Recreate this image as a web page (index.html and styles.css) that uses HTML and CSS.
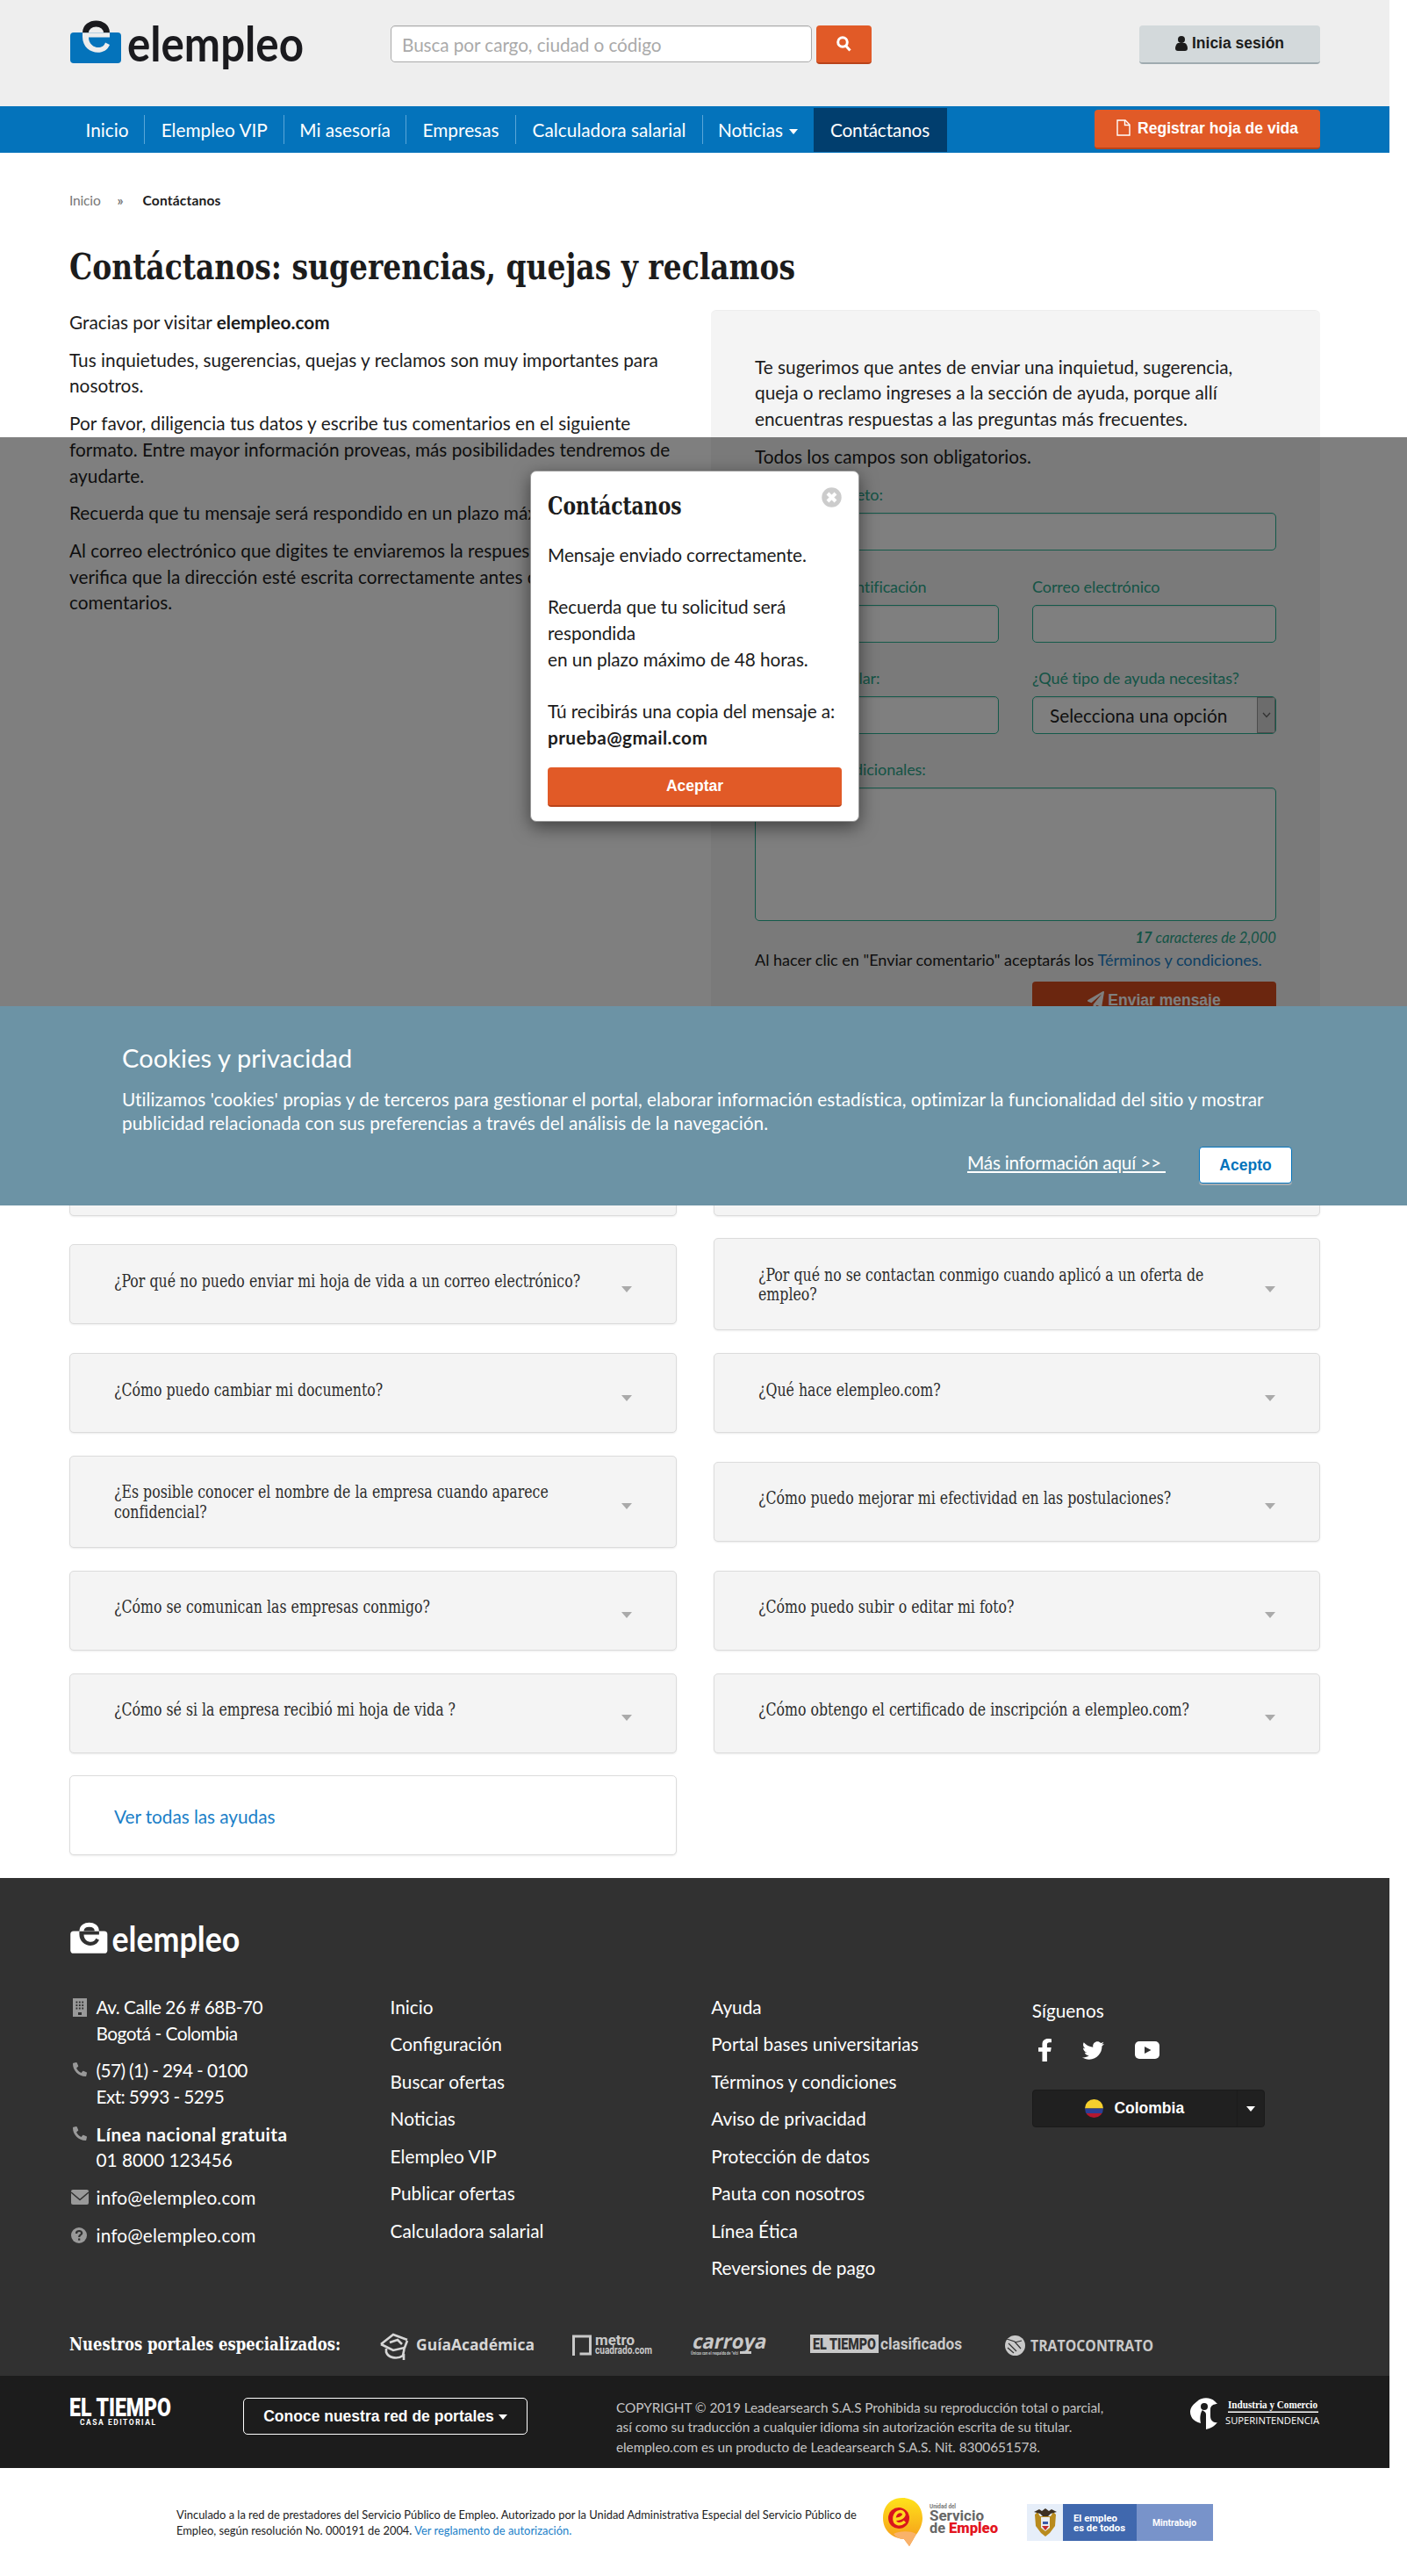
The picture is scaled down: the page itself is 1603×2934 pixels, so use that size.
FILE: index.html
```html
<!DOCTYPE html>
<html lang="es">
<head>
<meta charset="utf-8">
<title>Contáctanos | elempleo</title>
<link rel="stylesheet" href="styles.css">
</head>
<body>
<svg width="0" height="0" class="defs" aria-hidden="true">
  <symbol id="phone" viewBox="0 0 512 512"><path transform="matrix(-1 0 0 1 512 0)" d="M493.4 24.6l-104-24c-11.3-2.6-22.9 3.3-27.5 13.9l-48 112c-4.2 9.8-1.4 21.3 6.9 28l60.6 49.6c-36 76.7-98.9 140.5-177.2 177.2l-49.6-60.6c-6.8-8.3-18.2-11.1-28-6.9l-112 48C3.9 366.5-2 378.1.6 389.4l24 104C27.1 504.2 36.7 512 48 512c256.1 0 464-207.5 464-464 0-11.2-7.7-20.9-18.6-23.4z"/></symbol>
</svg>
<div class="page">
  <header class="header">
    <div class="container header-row">
      <svg class="logo" width="268" height="62" viewBox="0 0 268 62">
        <rect x="0" y="13" width="58" height="35" rx="4" fill="#0473bb"/>
        <path d="M17.500 13.500C17.500 -.5 41.500 -.5 41.500 13.500" fill="none" stroke="#1a1a1e" stroke-width="7"/>
        <path d="M14 13.300H45V18.500H21C21 31 37 34 40 24.500L45 27C39 42 14 37 14 18Z" fill="#ededed"/>
        <text x="65" y="46" font-size="56" textLength="201" lengthAdjust="spacingAndGlyphs" fill="#1a1a1e" class="brand">elempleo</text>
      </svg>
      <div class="search">
        <div class="search-input">Busca por cargo, ciudad o código</div>
        <button class="btn btn-orange btn-search"><svg width="17" height="18" viewBox="0 0 17 18" fill="none" stroke="#fff" stroke-width="3"><circle cx="7" cy="7" r="5.300"/><path d="M10.500 11l5 5.500"/></svg></button>
      </div>
      <button class="btn btn-gray"><svg width="14" height="17" viewBox="0 0 14 17" fill="#1c1c1c"><circle cx="7" cy="4" r="4"/><path d="M3 8h8c2 1 3 4 3 6s-1 3-3 3H3c-2 0-3-1-3-3s1-5 3-6z"/></svg>Inicia sesión</button>
    </div>
  </header>
  <nav class="nav">
    <div class="container nav-row">
      <div class="menu">
        <a>Inicio</a><a>Elempleo VIP</a><a>Mi asesoría</a><a>Empresas</a><a>Calculadora salarial</a><a>Noticias<i class="caret"></i></a><a class="active">Contáctanos</a>
      </div>
      <button class="btn btn-orange btn-register"><svg width="16" height="19" viewBox="0 0 16 19" fill="none" stroke="#fff" stroke-width="1.400"><path d="M1 1h9l5 5v12H1z"/><path d="M9.500 1v5.500H15"/></svg>Registrar hoja de vida</button>
    </div>
  </nav>

  <div class="container">
    <div class="crumbs"><span>Inicio</span><b class="sep">»</b><b>Contáctanos</b></div>
    <h1>Contáctanos: sugerencias, quejas y reclamos</h1>
    <div class="main">
      <div class="intro">
        <p>Gracias por visitar <b>elempleo.com</b></p>
        <p>Tus inquietudes, sugerencias, quejas y reclamos son muy importantes para<br>nosotros.</p>
        <p>Por favor, diligencia tus datos y escribe tus comentarios en el siguiente<br>formato. Entre mayor información proveas, más posibilidades tendremos de<br>ayudarte.</p>
        <p>Recuerda que tu mensaje será respondido en un plazo máximo</p>
        <p>Al correo electrónico que digites te enviaremos la respuesta,<br>verifica que la dirección esté escrita correctamente antes de<br>comentarios.</p>
      </div>
      <div class="panel">
        <p>Te sugerimos que antes de enviar una inquietud, sugerencia,<br>queja o reclamo ingreses a la sección de ayuda, porque allí<br>encuentras respuestas a las preguntas más frecuentes.</p>
        <p>Todos los campos son obligatorios.</p>
        <div class="form">
          <div class="field wide"><label>Nombre completo:</label><div class="input"></div></div>
          <div class="field"><label class="loose">Número de identificación</label><div class="input"></div></div>
          <div class="field"><label>Correo electrónico</label><div class="input"></div></div>
          <div class="field"><label>Teléfono o celular:</label><div class="input"></div></div>
          <div class="field"><label>¿Qué tipo de ayuda necesitas?</label><div class="input select"><span>Selecciona una opción</span><i><svg width="10" height="7" viewBox="0 0 10 7" fill="none" stroke="#666" stroke-width="1.300"><path d="M1 1l4 4.500L9 1"/></svg></i></div></div>
          <div class="field wide"><label>Comentarios adicionales:</label><div class="input area"></div></div>
        </div>
        <div class="counter"><b>17</b> caracteres de 2,000</div>
        <div class="legal">Al hacer clic en "Enviar comentario" aceptarás los <a>Términos y condiciones.</a></div>
        <button class="btn btn-send"><svg width="19" height="19" viewBox="0 0 512 512" fill="#fff"><path d="M476 3.2L12.5 270.6c-18.1 10.4-15.8 35.6 2.2 43.2L121 358.4l287.3-253.2c5.5-4.9 13.3 2.6 8.6 8.3L176 407v80.5c0 23.6 28.5 32.9 42.5 15.8L282 426l124.6 52.2c14.2 6 30.4-2.900 33-18.200l72-432C515 7.800 493.300-6.800 476 3.200z"/></svg>Enviar mensaje</button>
      </div>
    </div>

    <div class="faq">
      <div class="card"></div>
      <div class="card"></div>
      <div class="card"><span>¿Por qué no puedo enviar mi hoja de vida a un correo electrónico?</span><i></i></div>
      <div class="card two"><span>¿Por qué no se contactan conmigo cuando aplicó a un oferta de<br>empleo?</span><i></i></div>
      <div class="card"><span>¿Cómo puedo cambiar mi documento?</span><i></i></div>
      <div class="card"><span>¿Qué hace elempleo.com?</span><i></i></div>
      <div class="card two"><span>¿Es posible conocer el nombre de la empresa cuando aparece<br>confidencial?</span><i></i></div>
      <div class="card"><span>¿Cómo puedo mejorar mi efectividad en las postulaciones?</span><i></i></div>
      <div class="card"><span>¿Cómo se comunican las empresas conmigo?</span><i></i></div>
      <div class="card"><span>¿Cómo puedo subir o editar mi foto?</span><i></i></div>
      <div class="card"><span>¿Cómo sé si la empresa recibió mi hoja de vida ?</span><i></i></div>
      <div class="card"><span>¿Cómo obtengo el certificado de inscripción a elempleo.com?</span><i></i></div>
      <div class="card more"><a>Ver todas las ayudas</a></div>
    </div>
  </div>

  <footer class="footer">
    <div class="container">
      <svg class="flogo" width="195" height="45" viewBox="0 0 268 62">
        <rect x="0" y="13" width="58" height="35" rx="5" fill="#fff"/>
        <path d="M17.500 13.500C17.500 -.5 41.500 -.5 41.500 13.500" fill="none" stroke="#fff" stroke-width="7"/>
        <path d="M14 13.300H45V18.500H21C21 31 37 34 40 24.500L45 27C39 42 14 37 14 18Z" fill="#313131"/>
        <text x="65" y="46" font-size="56" textLength="201" lengthAdjust="spacingAndGlyphs" fill="#fff" class="brand">elempleo</text>
      </svg>
      <div class="fcols">
        <ul class="contact">
          <li><svg width="16" height="21" viewBox="0 0 16 21"><path fill="#999" d="M0 0h16v21H0z"/><path stroke="#313131" stroke-width="1.800" stroke-dasharray="1.800 1.600" d="M3.500 4.500h10M3.500 8h10M3.500 11.500h10"/><path fill="#313131" d="M6 16h4v3H6z"/></svg><span>Av. Calle 26 # 68B-70<br>Bogotá - Colombia</span></li>
          <li><svg width="16" height="16" fill="#999"><use href="#phone"/></svg><span>(57) (1) - 294 - 0100<br>Ext: 5993 - 5295</span></li>
          <li><svg width="16" height="16" fill="#999"><use href="#phone"/></svg><span><b>Línea nacional gratuita</b><br>01 8000 123456</span></li>
          <li><svg width="20" height="17" viewBox="0 0 20 17"><rect width="20" height="17" rx="2" fill="#999"/><path d="M0 3l10 8.500L20 3" fill="none" stroke="#313131" stroke-width="1.600"/></svg><span>info@elempleo.com</span></li>
          <li><svg width="18" height="18" viewBox="0 0 18 18"><circle cx="9" cy="9" r="9" fill="#999"/><path d="M6 7c0-4 6.200-3.800 6.200-.6C12.200 8.600 9.200 8.400 9.200 11M9.200 12.500v2.300" fill="none" stroke="#313131" stroke-width="2.200"/></svg><span>info@elempleo.com</span></li>
        </ul>
        <ul><li>Inicio</li><li>Configuración</li><li>Buscar ofertas</li><li>Noticias</li><li>Elempleo VIP</li><li>Publicar ofertas</li><li>Calculadora salarial</li></ul>
        <ul><li>Ayuda</li><li>Portal bases universitarias</li><li>Términos y condiciones</li><li>Aviso de privacidad</li><li>Protección de datos</li><li>Pauta con nosotros</li><li>Línea Ética</li><li>Reversiones de pago</li></ul>
        <div class="social">
          <div>Síguenos</div>
          <div class="nets">
            <svg width="15" height="26" viewBox="22 0 276 512" preserveAspectRatio="none" fill="#fff"><path d="M279.140 288l14.220-92.660h-88.910v-60.130c0-25.350 12.420-50.060 52.240-50.060h40.420V6.260S260.430 0 225.360 0c-73.220 0-121.080 44.380-121.080 124.720v70.620H22.890V288h81.390v224h100.170V288z"/></svg>
            <svg width="25" height="25" viewBox="0 0 512 512" fill="#fff"><path d="M459.370 151.716c.325 4.548.325 9.097.325 13.645 0 138.720-105.583 298.558-298.558 298.558-59.452 0-114.680-17.219-161.137-47.106 8.447.974 16.568 1.299 25.340 1.299 49.055 0 94.213-16.568 130.274-44.832-46.132-.975-84.792-31.188-98.112-72.772 6.498.974 12.995 1.624 19.818 1.624 9.421 0 18.843-1.300 27.614-3.573-48.081-9.747-84.143-51.980-84.143-102.985v-1.299c13.969 7.797 30.214 12.670 47.431 13.319-28.264-18.843-46.781-51.005-46.781-87.391 0-19.492 5.197-37.360 14.294-52.954 51.655 63.675 129.300 105.258 216.365 109.807-1.624-7.797-2.599-15.918-2.599-24.040 0-57.828 46.782-104.934 104.934-104.934 30.213 0 57.502 12.670 76.670 33.137 23.715-4.548 46.456-13.320 66.599-25.340-7.798 24.366-24.366 44.833-46.132 57.827 21.117-2.273 41.584-8.122 60.426-16.243-14.292 20.791-32.161 39.308-52.628 54.253z"/></svg>
            <svg width="28" height="20" viewBox="0 0 28 20"><rect width="28" height="20" rx="5" fill="#fff"/><path d="M11 6l7.500 4L11 14z" fill="#313131"/></svg>
          </div>
          <div class="country"><div><svg width="21" height="21" viewBox="0 0 21 21"><clipPath id="r"><circle cx="10.500" cy="10.500" r="10.500"/></clipPath><g clip-path="url(#r)"><path fill="#f5cf2e" d="M0 0h21v10.500H0z"/><path fill="#2c3f94" d="M0 10.500h21v5.500H0z"/><path fill="#b3172f" d="M0 16h21v5H0z"/></g></svg>Colombia</div><div class="drop"><i class="caret"></i></div></div>
        </div>
      </div>
      <div class="portals">
        <h4>Nuestros portales especializados:</h4>
        <svg width="883" height="34" viewBox="433 2655 883 34" fill="#c9c9c9">
          <g fill="none" stroke="#d6d6d6" stroke-width="2.600"><path d="M434 2671l14-11 16 6M434 2671l14 7 13-3 3-8M440 2676v4c2 6 12 9 19 4l2-10M444 2669l9-3 5 5M460 2682v7"/></g>
          <text x="474" y="2678" font-size="18" textLength="135" lengthAdjust="spacingAndGlyphs" fill="#d6d6d6" class="sans-b">GuíaAcadémica</text>
          <path d="M653.500 2684v-22h19v20h-12" fill="none" stroke="#c9c9c9" stroke-width="3"/>
          <text x="678" y="2672" font-size="17" textLength="45" lengthAdjust="spacingAndGlyphs" class="cond-b">metro</text>
          <text x="678" y="2682" font-size="12" textLength="65" lengthAdjust="spacingAndGlyphs" class="cond-b">cuadrado.com</text>
          <text transform="translate(788 2676) skewX(-12)" font-size="23" textLength="84" lengthAdjust="spacingAndGlyphs" class="sans-b">carroya</text>
          <text x="787" y="2683" font-size="6" textLength="54" lengthAdjust="spacingAndGlyphs" class="sans-b">Únicos con el respaldo de "eltí</text>
          <path d="M843 2680.500h13" stroke="#c9c9c9" stroke-width="3"/>
          <path d="M923 2660h78v21h-78z"/>
          <text x="926" y="2677" font-size="19" textLength="72" lengthAdjust="spacingAndGlyphs" class="cond" fill="#313131">EL TIEMPO</text>
          <text x="1003" y="2677" font-size="19" textLength="93" lengthAdjust="spacingAndGlyphs" class="cond-b">clasificados</text>
          <circle cx="1156.500" cy="2672.500" r="11.500"/><path d="M1147 2665l9 3 7 8M1149 2670l9 9M1148 2675l7 6M1164 2667l-8 2" stroke="#313131" stroke-width="1.200" fill="none"/>
          <text x="1174" y="2679" font-size="18" textLength="140" lengthAdjust="spacingAndGlyphs" class="sans-b">TRATOCONTRATO</text>
        </svg>
      </div>
    </div>
  </footer>
  <div class="bottom">
    <div class="container bottom-row">
      <svg width="118" height="32" viewBox="0 0 118 32" fill="#fff"><text x="0" y="21" font-size="29" textLength="116" lengthAdjust="spacingAndGlyphs" class="cond">EL TIEMPO</text><text x="12" y="31" font-size="8.500" textLength="86" class="cond-b">CASA EDITORIAL</text></svg>
      <button class="btn-outline">Conoce nuestra red de portales<i class="caret"></i></button>
      <div class="copy">COPYRIGHT © 2019 Leadearsearch S.A.S Prohibida su reproducción total o parcial,<br>así como su traducción a cualquier idioma sin autorización escrita de su titular.<br>elempleo.com es un producto de Leadearsearch S.A.S. Nit. 8300651578.</div>
      <svg class="sic" width="148" height="36" viewBox="0 0 148 36" fill="#fff">
        <path d="M8 4C13-1 23-1 28 4l3 3c-4 0-8 2-8 6v8c0 5 4 8 8 7-4 5-8 7-13 8V19c0-3-3-4-3-4l-1-1c-3 4-3 10-2 15C3 27 0 21 0 16 0 11 4 7 8 4z"/><circle cx="16" cy="10" r="4" fill="#1c1c1c"/>
        <text x="43" y="12" font-size="13" textLength="102" lengthAdjust="spacingAndGlyphs" class="serif-b">Industria y Comercio</text>
        <path d="M43 15.500h103v1.600H43z"/>
        <text x="40" y="30" font-size="10.500" textLength="107" lengthAdjust="spacingAndGlyphs" class="sans">SUPERINTENDENCIA</text>
      </svg>
    </div>
  </div>
  <div class="gov">
    <div class="gov-text">Vinculado a la red de prestadores del Servicio Público de Empleo. Autorizado por la Unidad Administrativa Especial del Servicio Público de<br>Empleo, según resolución No. 000191 de 2004. <a>Ver reglamento de autorización.</a></div>
    <svg class="spe" width="132" height="56" viewBox="0 0 132 56">
      <defs><linearGradient id="y" x1="0" y1="0" x2="0" y2="1"><stop offset="0" stop-color="#ffe21a"/><stop offset=".75" stop-color="#f7a81b"/><stop offset="1" stop-color="#ee7a1a"/></linearGradient></defs>
      <path fill="url(#y)" d="M22 0c13 0 23 9 23 23 0 8-4 15-8 20l-7 12-6-8C9 46 0 36 0 23 0 9 9 0 22 0z"/>
      <path fill="#f9b26a" d="M12 41c6-3 18-4 26 0l-8 14-6-8c-5 0-9-2-12-6z"/>
      <circle cx="18" cy="23" r="12" fill="#d9161c"/>
      <path d="M12 24c5 1 11-1 12-5-1-5-9-5-11 3-1 8 6 10 12 5" fill="none" stroke="#ffd81f" stroke-width="3.500"/>
      <text x="53" y="12" font-size="7" textLength="30" lengthAdjust="spacingAndGlyphs" fill="#777" class="cond-b">Unidad del</text>
      <text x="53" y="26" font-size="16" textLength="62" lengthAdjust="spacingAndGlyphs" fill="#666" class="cond-b">Servicio</text>
      <text x="53" y="40" font-size="16" textLength="18" lengthAdjust="spacingAndGlyphs" fill="#666" class="cond-b">de</text>
      <text x="75" y="40" font-size="16" textLength="56" lengthAdjust="spacingAndGlyphs" fill="#e3161f" class="cond">Empleo</text>
    </svg>
    <svg class="min" width="212" height="42" viewBox="0 0 212 42">
      <path fill="#e6eef9" d="M0 0h41v42H0z"/><path fill="#4068ae" d="M41 0h84v42H41z"/><path fill="#7893ca" d="M125 0h87v42h-87z"/>
      <path fill="#b98b1e" d="M9 12l3-3 3 5h12l3-5 3 3-1 13-6 8-5 4-5-4-6-8z"/><path fill="#3c2f20" d="M8 9l6-3 3 2 4-3 4 3 3-2 6 3-7 2-3 3h-6l-3-3z"/><path fill="#e9edf0" d="M16 15h10v12l-5 4-5-4z"/><path fill="#3a5aa8" d="M18 20h6v3h-6z"/><path fill="#c22a2a" d="M17 25h8l-4 5z"/>
      <text x="53" y="20" font-size="11" textLength="50" lengthAdjust="spacingAndGlyphs" fill="#fff" class="cond-b">El empleo</text>
      <text x="53" y="31" font-size="11" textLength="59" lengthAdjust="spacingAndGlyphs" fill="#fff" class="cond-b">es de todos</text>
      <text x="143" y="25" font-size="11" textLength="50" lengthAdjust="spacingAndGlyphs" fill="#fff" class="cond-b">Mintrabajo</text>
    </svg>
  </div>
</div>

<div class="backdrop"></div>
<div class="modal">
  <div class="modal-head"><h3>Contáctanos</h3><svg width="23" height="23" viewBox="0 0 23 23"><circle cx="11.500" cy="11.500" r="11.200" fill="#ccc"/><path d="M7 7l9 9M16 7l-9 9" stroke="#fff" stroke-width="4"/></svg></div>
  <div class="modal-body">Mensaje enviado correctamente.<br><br>Recuerda que tu solicitud será<br>respondida<br>en un plazo máximo de 48 horas.<br><br>Tú recibirás una copia del mensaje a:<br><b>prueba@gmail.com</b></div>
  <button class="btn btn-orange btn-accept">Aceptar</button>
</div>
<div class="cookies">
  <h2>Cookies y privacidad</h2>
  <p>Utilizamos 'cookies' propias y de terceros para gestionar el portal, elaborar información estadística, optimizar la funcionalidad del sitio y mostrar<br>publicidad relacionada con sus preferencias a través del análisis de la navegación.</p>
  <div class="cookies-actions"><a>Más información aquí &gt;&gt;&nbsp;</a><button class="btn btn-white">Acepto</button></div>
</div>
</body>
</html>
```
FILE: styles.css
```css
* { box-sizing: border-box; }
html { background: #fff; }
body { position: relative; margin: 0; width: 1603px; height: 2934px; overflow: hidden; font-family: Lato, "Noto Sans", sans-serif; font-size: 20.8px; line-height: 29.7px; color: #1c1c1c; }
p, h1, h2, h3, h4, ul { margin: 0; padding: 0; }
ul { list-style: none; }
a { color: #1b80c8; }
button { margin: 0; padding: 0; }
svg { overflow: visible; }
.defs { position: absolute; }
.page { width: 1583px; }
.container { width: 1425px; margin-left: 79px; }
text { font-family: "Open Sans", sans-serif; }
.brand { font-family: Lato, sans-serif; font-weight: 700; }
.sans-b { font-weight: 700; }
.sans { font-weight: 400; }
.cond { font-family: Roboto, sans-serif; font-weight: 900; }
.cond-b { font-family: Roboto, sans-serif; font-weight: 700; }
.serif-b { font-family: "Liberation Serif", serif; font-weight: 700; }

/* narrow slab headings */
h1, h3, h4, .card span { font-family: "DejaVu Serif Condensed", "DejaVu Serif", serif; font-stretch: condensed; transform-origin: 0 0; white-space: nowrap; }

.btn { display: flex; align-items: center; justify-content: center; border: 0; border-radius: 4px; font: bold 17.5px/24px "Liberation Sans", Arial, sans-serif; color: #fff; white-space: nowrap; }
.btn-orange { background: #e15a27; border-bottom: 2px solid #b9431a; }
.caret { display: inline-block; width: 0; height: 0; border: 5px solid transparent; border-top: 6px solid #fff; border-bottom: 0; vertical-align: middle; }

.header { height: 121px; background: #eee; }
.header-row { display: flex; align-items: flex-start; }
.logo { margin: 24px 0 0 1px; flex: none; }
.search { display: flex; gap: 5px; margin: 29px 0 0 97px; }
.search-input { width: 480px; height: 42px; border: 1px solid #aaa; border-radius: 5px; background: #fff; box-shadow: inset 0 1px 1px rgba(0,0,0,.08); padding: 6px 12px; line-height: 30px; color: #aaa; letter-spacing: -.1px; }
.btn-search { width: 63px; height: 44px; }
.btn-gray { width: 206px; height: 44px; margin: 29px 0 0 auto; gap: 5px; background: #d3d9db; border-bottom: 2px solid #9fabb0; color: #1c1c1c; padding-bottom: 2px; }

.nav { height: 53px; background: #0473bb; }
.nav-row { display: flex; justify-content: space-between; }
.menu { display: grid; grid-template-columns: 86px 158.500px 139px 125px 213px 126px 152px; height: 51px; padding: 1px 0; margin-top: 1px; }
.menu a { display: flex; align-items: center; justify-content: center; color: #fff; white-space: nowrap; height: 50px; position: relative; }
.menu a:nth-child(-n+5)::after { content: ""; position: absolute; right: 0; top: 8px; width: 1px; height: 33px; background: #5aa6d8; }
.menu .caret { margin: 4px 0 0 7px; }
.menu .active { background: #013e6e; letter-spacing: -.15px; }
.btn-register { width: 257px; height: 45px; margin-top: 4px; gap: 8px; padding-bottom: 2px; }

.crumbs { display: flex; margin-top: 43px; height: 22px; font-size: 15.600px; line-height: 22px; color: #777; letter-spacing: -.2px; }
.crumbs b { color: #1c1c1c; letter-spacing: .15px; }
.crumbs .sep { width: 8px; margin: 0 21px 0 19px; color: #777; }
h1 { margin-top: 41px; font-weight: 700; font-size: 41px; line-height: 48px; transform: scaleX(.893); }
.main { display: grid; grid-template-columns: 1fr 694px; height: 860px; margin-top: 24px; }
.main p { margin-bottom: 13px; white-space: nowrap; }
.panel { margin-top: 1px; padding: 48.500px 50px 0; background: #f4f4f4; border: 1px solid #ededed; border-width: 1px 0; border-radius: 6px; }
.panel .form { display: grid; grid-template-columns: 1fr 1fr; gap: 27.300px 38px; margin-top: 16px; }
.wide { grid-column: 1 / -1; }
.field { display: grid; gap: 8px; grid-template-rows: 26px 43px; }
.field label { font-size: 18px; line-height: 26px; color: #2aa88c; white-space: nowrap; letter-spacing: -.08px; }
.field .loose { letter-spacing: -.15px; }
.input { border: 1px solid #28b496; border-radius: 5px; background: #fff; box-shadow: inset 0 1px 2px rgba(0,0,0,.1); }
.field .area { height: 152px; }
.field:last-child { grid-template-rows: 26px 152px; }
.select { display: flex; justify-content: space-between; overflow: hidden; padding-left: 19px; line-height: 41px; color: #222; }
.select i { display: flex; align-items: center; justify-content: center; width: 21px; background: #d8d8d8; border: 1px solid #999; }
.counter { margin-top: 7px; font-size: 16.600px; line-height: 24px; text-align: right; font-style: italic; color: #2aa88c; }
.legal { font-size: 18.050px; line-height: 26px; white-space: nowrap; }
.btn-send { width: 278px; height: 44px; margin: 12px 0 0 auto; gap: 4px; background: #d64c1f; border-bottom: 3px solid #a8380f; }

.faq { display: grid; grid-template-columns: 1fr 1fr; gap: 25.700px 42px; align-items: center; margin: 81.500px 0 25.500px; }
.card { display: flex; justify-content: space-between; height: 91.100px; padding: 30.500px 50px 0; border: 1px solid #dcdcdc; border-radius: 5px; background: #f4f4f4; box-shadow: 0 1px 2px rgba(0,0,0,.08); white-space: nowrap; }
.card span { width: 500px; font-size: 19.600px; line-height: 22.300px; color: #2c2c2c; transform: scaleX(.895); }
.card i { width: 0; height: 0; margin: 16px 0 0; border: 6px solid transparent; border-top: 7px solid #aaa; border-bottom: 0; }
.card.two { height: 105.200px; }
.card.two i { margin-top: 23px; }
.more { background: #fff; letter-spacing: -.05px; }

.footer { height: 567px; background: #313131; color: #fff; }
.flogo { display: block; margin-left: 1px; }
.footer .container { padding-top: 51px; }
.fcols { display: grid; grid-template-columns: repeat(4, 365.600px); height: 354px; margin-top: 36px; line-height: 29.500px; white-space: nowrap; }
.fcols li { margin-bottom: 13px; }
.contact li { display: grid; grid-template-columns: 30.500px 1fr; line-height: 29.700px; }
.contact li:first-child { letter-spacing: -.5px; }
.contact li:nth-child(2) { letter-spacing: -.6px; }
.contact b { letter-spacing: .4px; }
.contact li:nth-child(n+4) span { letter-spacing: .15px; }
.contact svg { margin: 6px 0 0 4px; }
.contact li:first-child svg { margin-top: 5px; }
.contact li:nth-child(n+4) svg { margin-left: 2px; }
.social { padding-top: 4px; }
.nets { display: flex; align-items: center; gap: 35px; margin: 17px 0 0 7px; height: 28px; }
.country { display: flex; width: 265px; height: 43px; margin-top: 31px; background: #202020; border: 1px solid #1a1a1a; border-radius: 4px; font: bold 17.500px/41px "Liberation Sans", Arial, sans-serif; }
.country div { display: flex; align-items: center; justify-content: center; gap: 12px; flex: 1; }
.country .drop { flex: none; width: 31px; border-left: 1px solid #1b1b1b; }
.portals { display: flex; align-items: center; gap: 44px; height: 34px; margin-top: 29px; }
.portals h4 { width: 310px; font-weight: 700; font-size: 21px; line-height: 30px; transform: scaleX(.871); margin-top: -2px; }
.portals svg { flex: none; }
.bottom { height: 105px; background: #1c1c1c; color: #c4c4c4; }
.bottom-row { display: flex; align-items: flex-start; padding-top: 25px; }
.btn-outline { width: 324px; height: 42px; margin-left: 80px; border: 1px solid #fff; border-radius: 5px; background: none; color: #fff; font: bold 17.500px/24px "Liberation Sans", Arial, sans-serif; white-space: nowrap; }
.btn-outline .caret { margin-left: 5px; }
.copy { margin: 0 0 0 101px; font-size: 15.400px; line-height: 22.400px; white-space: nowrap; letter-spacing: -.07px; }
.sic { margin-left: auto; }
.gov { display: flex; align-items: flex-start; margin-left: 201px; }
.gov-text { width: 805px; padding-top: 44px; font-size: 12.900px; line-height: 18.300px; white-space: nowrap; }
.spe { margin-top: 34px; }
.min { margin: 41px 0 0 32px; }

.backdrop { position: absolute; left: 0; top: 498px; width: 1603px; height: 648px; background: rgba(0,0,0,.5); }
.modal { position: absolute; left: 604px; top: 536px; width: 375px; height: 400px; padding: 0 19px; border: 1px solid #999; border-radius: 7px; background: #fff; box-shadow: 0 6px 20px rgba(0,0,0,.5); }
.modal-head { display: flex; justify-content: space-between; padding-top: 18px; height: 80px; }
.modal-head h3 { width: 160px; padding-top: 6px; font-weight: 700; font-size: 27px; line-height: 32px; transform: scaleX(.9); }
.modal-body { height: 257px; line-height: 29.700px; letter-spacing: -.08px; white-space: nowrap; }
.modal-body b { letter-spacing: .4px; }
.btn-accept { width: 335px; height: 45px; padding-bottom: 1px; }
.cookies { position: absolute; left: 0; top: 1146px; width: 1603px; height: 227px; padding: 40px 131px 0 139px; background: #6c93a5; color: #fff; }
.cookies h2 { font-size: 29px; line-height: 38px; font-weight: 400; letter-spacing: .1px; }
.cookies p { margin-top: 14px; line-height: 27px; white-space: nowrap; letter-spacing: .025px; }
.cookies-actions { display: flex; justify-content: flex-end; align-items: flex-start; gap: 38px; margin-top: 14px; }
.cookies-actions a { color: #fff; text-decoration: underline; margin-top: 3px; letter-spacing: -.2px; }
.btn-white { width: 106px; height: 42px; background: #fff; color: #0473bb; border: 1px solid #0473bb; box-shadow: 0 2px 0 #a5adb3; }
```
